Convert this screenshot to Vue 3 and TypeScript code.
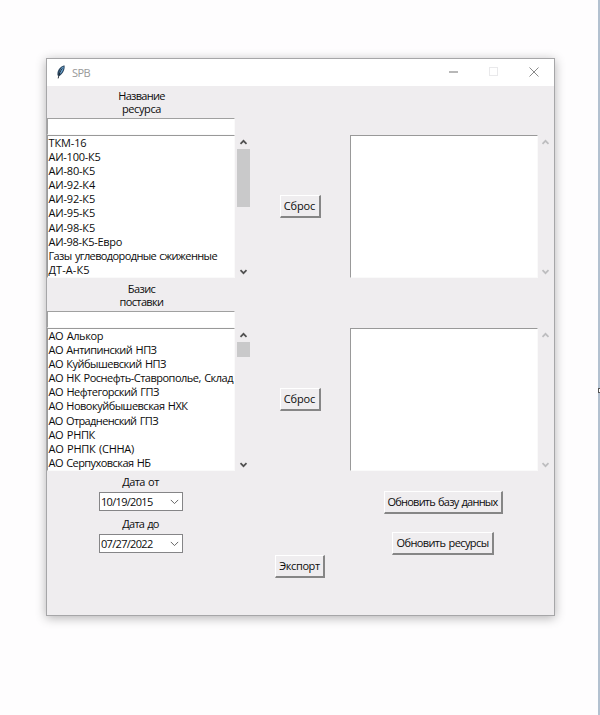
<script setup lang="ts">
interface Line {
  text: string
  width: number
}
interface Section {
  label: Line[]
  items: Line[]
  thumb: number
}

const line = (text: string, width: number): Line => ({ text, width })

// Spreads or tightens the letters so that the text takes the given width.
const fit = (el: HTMLElement, width: number) => {
  const natural = el.getBoundingClientRect().width
  const count = (el.textContent ?? '').length
  el.style.letterSpacing = `${(width + 0.5 - natural) / count}px`
}
const vFit = {
  mounted: (el: HTMLElement, binding: { value: number }) => fit(el, binding.value),
}

const sections: Section[] = [
  {
    label: [line('Название', 46), line('ресурса', 38.5)],
    items: [
      line('ТКМ-16', 37.5),
      line('АИ-100-К5', 51.5),
      line('АИ-80-К5', 46),
      line('АИ-92-К4', 46),
      line('АИ-92-К5', 46),
      line('АИ-95-К5', 46),
      line('АИ-98-К5', 46),
      line('АИ-98-К5-Евро', 73),
      line('Газы углеводородные сжиженные', 168),
      line('ДТ-А-К5', 40.5),
    ],
    thumb: 58,
  },
  {
    label: [line('Базис', 27), line('поставки', 43.5)],
    items: [
      line('АО Алькор', 54),
      line('АО Антипинский НПЗ', 107.5),
      line('АО Куйбышевский НПЗ', 117),
      line('АО НК Роснефть-Ставрополье, Склад', 184),
      line('АО Нефтегорский ГПЗ', 110),
      line('АО Новокуйбышевская НХК', 138.5),
      line('АО Отрадненский ГПЗ', 109),
      line('АО РНПК', 46),
      line('АО РНПК (СННА)', 85),
      line('АО Серпуховская НБ', 101.5),
    ],
    thumb: 15,
  },
]

const dates = [
  { label: 'Дата от', value: '10/19/2015' },
  { label: 'Дата до', value: '07/27/2022' },
]
</script>

<template>
  <div class="desktop">
    <main class="window">
      <header class="titlebar">
        <svg class="feather" width="12" height="16" viewBox="0 0 12 16">
          <path d="M2.6 11.4C1.6 7.4 4.6 2.6 9.4 1.2C10.4 4.4 8.2 9.6 4.4 11.9Z" fill="#2b465f" />
          <path d="M4.2 9.4C4.7 6.2 6.3 3.6 8.6 2.5C8.7 5.4 7.2 8.5 4.8 10.1Z" fill="#6fabda" />
          <path d="M7.4 4.4C5.2 7 4.1 9.6 3.2 14.4" fill="none" stroke="#18222c" stroke-width="0.9" />
        </svg>
        <div class="title"><span v-fit="17.5">SPB</span></div>
        <svg class="controls" width="100" height="12" viewBox="0 0 100 12">
          <path d="M2 6H11" stroke="#9a9a9a" stroke-width="1.4" />
          <rect x="42.5" y="1.5" width="8" height="8" fill="none" stroke="#e9e9eb" />
          <path d="M82.5 1.5L91.5 10.5M91.5 1.5L82.5 10.5" stroke="#8a8a8a" stroke-width="1" />
        </svg>
      </header>

      <section v-for="s in sections" :key="s.thumb" class="section">
        <div class="caption">
          <div v-for="l in s.label" :key="l.text"><span v-fit="l.width">{{ l.text }}</span></div>
        </div>
        <div class="entry"></div>
        <div class="lists">
          <ul class="listbox">
            <li v-for="i in s.items" :key="i.text"><span v-fit="i.width">{{ i.text }}</span></li>
          </ul>
          <div class="scroll">
            <svg width="9" height="6" viewBox="0 0 9 6"><path d="M1.5 4.8L4.5 1.8L7.5 4.8" /></svg>
            <div class="thumb" :style="{ height: s.thumb + 'px' }"></div>
            <svg class="down" width="9" height="6" viewBox="0 0 9 6"><path d="M1.5 1.2L4.5 4.2L7.5 1.2" /></svg>
          </div>
          <div class="middle">
            <button class="btn reset"><span v-fit="31">Сброс</span></button>
          </div>
          <div class="listbox"></div>
          <div class="scroll off">
            <svg width="9" height="6" viewBox="0 0 9 6"><path d="M1.5 4.8L4.5 1.8L7.5 4.8" /></svg>
            <svg class="down" width="9" height="6" viewBox="0 0 9 6"><path d="M1.5 1.2L4.5 4.2L7.5 1.2" /></svg>
          </div>
        </div>
      </section>

      <footer class="bottom">
        <div class="dates">
          <template v-for="d in dates" :key="d.label">
            <div class="date-label"><span v-fit="36">{{ d.label }}</span></div>
            <div class="combo">
              <span v-fit="51">{{ d.value }}</span>
              <svg width="9" height="6" viewBox="0 0 9 6"><path d="M0.8 0.9L4.5 4.6L8.2 0.9" /></svg>
            </div>
          </template>
        </div>
        <div class="export">
          <button class="btn exp"><span v-fit="40">Экспорт</span></button>
        </div>
        <div class="updates">
          <button class="btn db"><span v-fit="109.5">Обновить базу данных</span></button>
          <button class="btn res"><span v-fit="91.5">Обновить ресурсы</span></button>
        </div>
      </footer>
    </main>
    <aside class="edge"><i></i></aside>
  </div>
</template>

<style>
body {
  margin: 0;
  background: #fefdfe;
}
</style>

<style scoped>
.desktop {
  position: relative;
  box-sizing: border-box;
  width: 600px;
  height: 715px;
  padding: 58px 0 0 46px;
  overflow: hidden;
  background: #fefdfe;
  font: 11px/13px "Open Sans", "Noto Sans", sans-serif;
  color: #0c0c0c;
}
.desktop span {
  display: inline-block;
  white-space: nowrap;
  word-spacing: 1px;
}
.window {
  box-sizing: border-box;
  width: 509px;
  height: 558px;
  border: 1px solid #a6a6a8;
  background: #efedef;
  box-shadow: 0 2px 10px rgba(0, 0, 0, 0.3);
}
.titlebar {
  display: flex;
  align-items: center;
  box-sizing: border-box;
  height: 27px;
  padding: 0 0 1px 8px;
  background: #fff;
}
.title {
  flex: 1;
  margin-left: 5px;
  color: #999;
}
.controls {
  margin-right: 7px;
}
.section {
  height: 193px;
}
.caption {
  box-sizing: border-box;
  width: 189px;
  height: 32px;
  padding-top: 3px;
  line-height: 13px;
  text-align: center;
}
.caption div {
  height: 13px;
}
.entry {
  box-sizing: border-box;
  width: 188px;
  height: 17px;
  border: 1px solid #fafafa;
  border-top-color: #a0a0a0;
  border-left-color: #a0a0a0;
  background: #fff;
}
.lists {
  display: grid;
  grid-template-columns: 188px 15px 100px 188px 15px;
  height: 143px;
}
.listbox {
  box-sizing: border-box;
  margin: 0;
  padding: 0 0 0 0.5px;
  border: 1px solid #fafafa;
  border-top-color: #999;
  border-left-color: #999;
  background: #fff;
  list-style: none;
}
.listbox li {
  height: 14.1px;
  line-height: 14.1px;
}
.scroll {
  display: flex;
  flex-direction: column;
  align-items: center;
  box-sizing: border-box;
  padding: 4px 0 3px 1px;
}
.scroll svg {
  flex: none;
}
.scroll path {
  fill: none;
  stroke: #505050;
  stroke-width: 1.7;
}
.scroll.off {
  padding-right: 2px;
}
.scroll.off path {
  stroke: #bdbdbf;
}
.thumb {
  width: 13px;
  margin-top: 4px;
  background: #c9c9ca;
}
.down {
  margin-top: auto;
}
.middle {
  display: flex;
  justify-content: center;
  padding: 60px 0 0;
}
.btn {
  display: flex;
  align-items: center;
  justify-content: center;
  box-sizing: border-box;
  height: 23px;
  padding: 0 0 1px;
  border: 1px solid #fff;
  border-right: 2px solid #868686;
  border-bottom: 2px solid #868686;
  background: #efedef;
  font: inherit;
  color: inherit;
}
.reset {
  width: 41px;
}
.bottom {
  display: grid;
  grid-template-columns: 189px 127px 160px;
}
.dates {
  display: flex;
  flex-direction: column;
  align-items: center;
  padding: 3px 2px 0 0;
}
.date-label {
  height: 17px;
  line-height: 14px;
}
.combo {
  display: flex;
  align-items: center;
  justify-content: space-between;
  box-sizing: border-box;
  width: 84px;
  height: 19px;
  margin-bottom: 6px;
  padding: 0 3px 0 1.5px;
  border: 1px solid #858587;
  background: #fff;
}
.combo path {
  fill: none;
  stroke: #666;
}
.export {
  padding: 83px 0 0 39px;
}
.exp {
  width: 50px;
}
.updates {
  display: flex;
  flex-direction: column;
  align-items: center;
  gap: 18px;
  padding-top: 19px;
}
.db {
  width: 119px;
}
.res {
  width: 102px;
}
.edge {
  position: absolute;
  top: 0;
  right: 0;
  width: 2px;
  height: 715px;
  background: #b3c1d0;
}
.edge i {
  position: absolute;
  top: 388px;
  left: 0;
  width: 2px;
  height: 3px;
  border: 1px solid #555;
  border-right: 0;
  background: #fff;
}
</style>
